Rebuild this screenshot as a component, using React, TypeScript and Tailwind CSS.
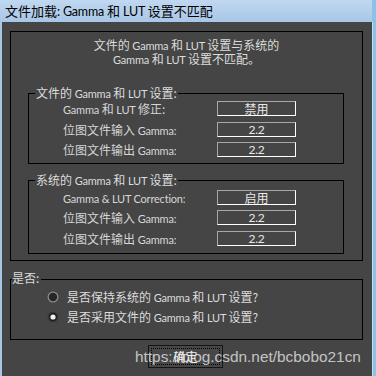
import React from 'react';

const font = { fontFamily: '"Noto Sans CJK SC", "Noto Sans", sans-serif' };

// latin runs are narrower and a touch smaller than the CJK glyphs in the dialog
const Mixed: React.FC<{ text: string; latin?: string }> = ({ text, latin = 'text-[11px]' }) => (
  <>
    {text.split(/([\x20-\x7E]+)/).map((part, i) =>
      /[A-Za-z0-9]/.test(part) ? (
        <span key={i} className={`font-[Lato] tracking-[-0.2px] ${latin}`}>
          {part}
        </span>
      ) : (
        <span key={i}>{part}</span>
      )
    )}
  </>
);

const ValueBox: React.FC<{ value: string }> = ({ value }) => (
  <div className="w-[79px] h-[15px] border border-t-[#a8a8a8] border-l-[#a8a8a8] border-b-white border-r-white flex items-center justify-center text-[12px] leading-none text-[#e8e8e8]">
    <Mixed text={value} latin="text-[12px]" />
  </div>
);

const Row: React.FC<{ label: string; value: string; className?: string }> = ({ label, value, className }) => (
  <div className={`flex items-center pl-[34px] ${className ?? ''}`}>
    <div className="w-[154px] text-[12px] leading-none text-[#d6d6d6] whitespace-nowrap">
      <Mixed text={label} />
    </div>
    <ValueBox value={value} />
  </div>
);

const Radio: React.FC<{ checked?: boolean }> = ({ checked }) => (
  <svg width="12" height="12" viewBox="0 0 12 12">
    <circle cx="6" cy="6" r="5.5" fill={checked ? '#3a3a3a' : '#8a8a8a'} />
    <circle cx="6" cy="6" r="4.2" fill={checked ? '#1e1e1e' : '#262626'} />
    {checked && <circle cx="6" cy="6" r="2.6" fill="#f0f0f0" />}
  </svg>
);

export default function App() {
  return (
    <div className="relative w-[376px] h-[376px] flex flex-col bg-[#454545] overflow-hidden" style={font}>
      <div className="h-[22px] shrink-0 bg-gradient-to-b from-[#c0d8f0] to-[#a8c6e6] pl-[5px] text-[13px] leading-[22px] text-black whitespace-nowrap border-r-[4px] border-[#8fc0e8]">
        <Mixed text="文件加载: Gamma 和 LUT 设置不匹配" latin="text-[12.5px]" />
      </div>
      <div className="flex-1 flex">
        <div className="w-[2px] bg-[#a9c8e8]" />
        <div className="flex-1 flex flex-col pl-[8px] pr-[9px] pt-[9px]">
          {/* top box */}
          <div className="h-[230px] border border-black flex flex-col">
            <div className="pt-[6px] text-center text-[12px] leading-[13px] text-[#dcdcdc]">
              <div><Mixed text="文件的 Gamma 和 LUT 设置与系统的" /></div>
              <div><Mixed text="Gamma 和 LUT 设置不匹配。" /></div>
            </div>

            <div className="relative mt-[27px] ml-[17px] w-[316px] h-[71px] border border-black">
              <div className="absolute left-[6px] -top-[8px] bg-[#454545] px-[1px] text-[12px] leading-[14px] text-[#dcdcdc] whitespace-nowrap">
                <Mixed text="文件的 Gamma 和 LUT 设置:" />
              </div>
              <Row className="mt-[7px]" label="Gamma 和 LUT 修正:" value="禁用" />
              <Row className="mt-[6px]" label="位图文件输入 Gamma:" value="2.2" />
              <Row className="mt-[5px]" label="位图文件输出 Gamma:" value="2.2" />
            </div>

            <div className="relative mt-[16px] ml-[17px] w-[316px] h-[74px] border border-black">
              <div className="absolute left-[6px] -top-[8px] bg-[#454545] px-[1px] text-[12px] leading-[14px] text-[#dcdcdc] whitespace-nowrap">
                <Mixed text="系统的 Gamma 和 LUT 设置:" />
              </div>
              <Row className="mt-[9px]" label="Gamma & LUT Correction:" value="启用" />
              <Row className="mt-[5px]" label="位图文件输入 Gamma:" value="2.2" />
              <Row className="mt-[6px]" label="位图文件输出 Gamma:" value="2.2" />
            </div>
          </div>

          {/* choice box */}
          <div className="relative mt-[18px] h-[61px] border border-black flex flex-col">
            <div className="absolute left-[1px] -top-[9px] bg-[#454545] pr-[2px] text-[12px] leading-[14px] text-[#dcdcdc]">
              是否:
            </div>
            <div className="flex items-center pl-[36px] mt-[11px] gap-[8px] text-[12px] leading-none text-[#dcdcdc]">
              <Radio />
              <span><Mixed text="是否保持系统的 Gamma 和 LUT 设置?" /></span>
            </div>
            <div className="flex items-center pl-[36px] mt-[8px] gap-[8px] text-[12px] leading-none text-[#dcdcdc]">
              <Radio checked />
              <span><Mixed text="是否采用文件的 Gamma 和 LUT 设置?" /></span>
            </div>
          </div>

          <div className="mt-[5px] ml-[138px] w-[75px] h-[23px] border border-[#151515] bg-[#474747] p-[2px]">
            <div className="w-full h-full border border-dotted border-black flex items-center justify-center text-[12px] leading-none text-[#f0f0f0]">
              确定
            </div>
          </div>
        </div>
        <div className="w-[4px] bg-[#8fc0e8] border-l border-[#b8e4f4]" />
      </div>

      <div className="absolute left-[135px] top-[347px] font-['Liberation_Sans'] text-[15.4px] leading-[20px] text-[#e6e6e6]/80 whitespace-nowrap">
        https://blog.csdn.net/bcbobo21cn
      </div>
    </div>
  );
}
